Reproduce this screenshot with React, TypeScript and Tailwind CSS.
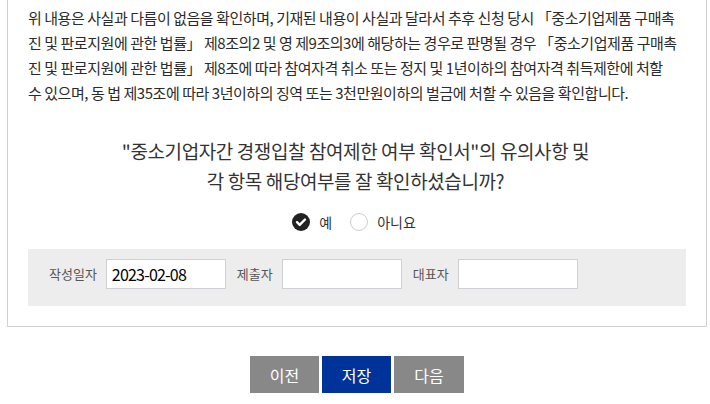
import { useState } from "react";

const lines = [
  "위 내용은 사실과 다름이 없음을 확인하며, 기재된 내용이 사실과 달라서 추후 신청 당시 「중소기업제품 구매촉",
  "진 및 판로지원에 관한 법률」 제8조의2 및 영 제9조의3에 해당하는 경우로 판명될 경우 「중소기업제품 구매촉",
  "진 및 판로지원에 관한 법률」 제8조에 따라 참여자격 취소 또는 정지 및 1년이하의 참여자격 취득제한에 처할",
  "수 있으며, 동 법 제35조에 따라 3년이하의 징역 또는 3천만원이하의 벌금에 처할 수 있음을 확인합니다.",
];

function Check({ on }: { on: boolean }) {
  return on ? (
    <svg width="18" height="18" viewBox="0 0 18 18">
      <circle cx="9" cy="9" r="9" fill="#222" />
      <path d="M5 9.2l2.7 2.7L13 6.5" stroke="#fff" strokeWidth="2.4" fill="none" strokeLinecap="round" strokeLinejoin="round" />
    </svg>
  ) : (
    <svg width="18" height="18" viewBox="0 0 18 18">
      <circle cx="9" cy="9" r="8.5" fill="#fff" stroke="#ccc" />
    </svg>
  );
}

export default function App() {
  const [agree, setAgree] = useState(true);
  const [date, setDate] = useState("2023-02-08");
  const [submitter, setSubmitter] = useState("");
  const [ceo, setCeo] = useState("");

  return (
    <div className="w-[710px] h-[404px] bg-white overflow-hidden font-['Noto_Sans_CJK_KR',sans-serif] text-[#333]">
      <div className="ml-[7px] mr-[3px] border-x border-b border-[#cfd3d8] px-[20px] pt-[5px] pb-[20px]">
        <div className="text-[15px] leading-[25px] tracking-[-0.45px] text-[#2b2b2b]">
          {lines.map((l, i) => (
            <p key={i} className="whitespace-nowrap">{l}</p>
          ))}
        </div>

        <div className="mt-[31px] pr-[3px] text-center text-[19px] leading-[30px] tracking-[-0.4px] text-[#333]">
          <p>"중소기업자간 경쟁입찰 참여제한 여부 확인서"의 유의사항 및</p>
          <p>각 항목 해당여부를 잘 확인하셨습니까?</p>
        </div>

        <div className="mt-[16px] pr-[6px] flex justify-center items-center gap-[10px] text-[14px] leading-[20px]">
          <label className="flex items-center gap-[9px] cursor-pointer" onClick={() => setAgree(true)}>
            <Check on={agree} />
            <span>예</span>
          </label>
          <label className="flex items-center gap-[9px] cursor-pointer ml-[8px]" onClick={() => setAgree(false)}>
            <Check on={!agree} />
            <span>아니요</span>
          </label>
        </div>

        <div className="mt-[17px] bg-[#ededed] flex items-start pt-[10px] pb-[17px] pl-[21px] text-[13px] text-[#555]">
          <span className="mr-[9px] leading-[30px]">작성일자</span>
          <input
            value={date}
            onChange={(e) => setDate(e.target.value)}
            className="w-[120px] h-[30px] bg-white border border-[#cdd1d6] px-[5px] text-[16px] text-black outline-none tracking-[-0.8px]"
          />
          <span className="ml-[11px] mr-[9px] leading-[30px]">제출자</span>
          <input
            value={submitter}
            onChange={(e) => setSubmitter(e.target.value)}
            className="w-[120px] h-[30px] bg-white border border-[#cdd1d6] px-[5px] text-[15px] text-black outline-none"
          />
          <span className="ml-[11px] mr-[9px] leading-[30px]">대표자</span>
          <input
            value={ceo}
            onChange={(e) => setCeo(e.target.value)}
            className="w-[120px] h-[30px] bg-white border border-[#cdd1d6] px-[5px] text-[15px] text-black outline-none"
          />
        </div>
      </div>

      <div className="mt-[29px] flex justify-center gap-[3px] pl-[4px]">
        <button className="w-[69px] h-[37px] bg-[#888888] text-white text-[16px]">이전</button>
        <button className="w-[69px] h-[37px] bg-[#003399] text-white text-[16px]">저장</button>
        <button className="w-[70px] h-[37px] bg-[#888888] text-white text-[16px]">다음</button>
      </div>
    </div>
  );
}
